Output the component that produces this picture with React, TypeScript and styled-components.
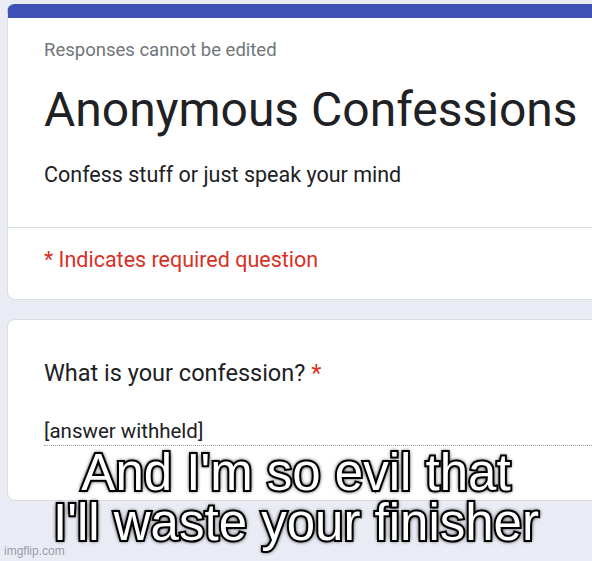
import React from "react";
import styled, { createGlobalStyle } from "styled-components";

const Global = createGlobalStyle`
  html, body { margin: 0; padding: 0; }
  body {
    background: #eaecf5;
    width: 592px;
    height: 561px;
    overflow: hidden;
    font-family: Roboto, "Liberation Sans", sans-serif;
  }
`;

const Page = styled.div`
  position: relative;
  width: 592px;
  height: 561px;
  overflow: hidden;
  padding: 4px 0 0 7px;
  box-sizing: border-box;
  display: flex;
  flex-direction: column;
  gap: 19px;
`;

const Card = styled.div<{ $accent?: boolean }>`
  width: 640px;
  flex: none;
  background: #fff;
  border: 1px solid #dadce0;
  border-radius: 8px;
  box-sizing: border-box;
  overflow: hidden;
  ${(p) => (p.$accent ? "border-top: 14px solid #3f51b5;" : "")}
`;

const HeaderBody = styled.div`
  padding: 20px 0 37px 36px;
  display: flex;
  flex-direction: column;
`;

const Note = styled.div`
  font-size: 18.5px;
  color: #70757a;
  line-height: 24px;
`;

const Title = styled.h1`
  margin: 20px 0 0;
  font-weight: 400;
  font-size: 48px;
  line-height: 56px;
  color: #202124;
  white-space: nowrap;
`;

const Description = styled.div`
  margin-top: 22px;
  font-size: 21.5px;
  line-height: 30px;
  color: #202124;
`;

const Divider = styled.div`
  height: 1px;
  background: #dadce0;
`;

const Required = styled.div`
  padding: 17px 0 24px 36px;
  font-size: 21.5px;
  line-height: 30px;
  color: #d93025;
`;

const QuestionBody = styled.div`
  padding: 37px 0 54px 36px;
  display: flex;
  flex-direction: column;
`;

const Question = styled.div`
  font-size: 23.5px;
  line-height: 32px;
  color: #202124;
`;

const Star = styled.span`
  color: #d93025;
`;

const Answer = styled.div`
  margin-top: 28px;
  font-size: 20.5px;
  line-height: 28px;
  color: #202124;
  border-bottom: 1px dotted #9aa0a6;
`;

const Caption = styled.div`
  position: absolute;
  left: 0;
  right: 0;
  top: 448px;
  text-align: center;
  font-family: "Liberation Sans", Arial, sans-serif;
  font-size: 51px;
  line-height: 50px;
  color: #fff;
  -webkit-text-stroke: 4px #000;
  paint-order: stroke fill;
  text-shadow: 0 0 5px #000, 0 0 4px #000, 0 0 3px #000;
`;

const Watermark = styled.div`
  position: absolute;
  left: 4px;
  bottom: 3px;
  font-family: "Liberation Sans", Arial, sans-serif;
  font-size: 12px;
  color: #9a9ca6;
`;

export default function App() {
  return (
    <>
      <Global />
      <Page>
        <Card $accent>
          <HeaderBody>
            <Note>Responses cannot be edited</Note>
            <Title>Anonymous Confessions</Title>
            <Description>Confess stuff or just speak your mind</Description>
          </HeaderBody>
          <Divider />
          <Required>* Indicates required question</Required>
        </Card>
        <Card>
          <QuestionBody>
            <Question>
              What is your confession? <Star>*</Star>
            </Question>
            <Answer>[answer withheld]</Answer>
          </QuestionBody>
        </Card>
        <Caption>
          And I'm so evil that
          <br />
          I'll waste your finisher
        </Caption>
        <Watermark>imgflip.com</Watermark>
      </Page>
    </>
  );
}
